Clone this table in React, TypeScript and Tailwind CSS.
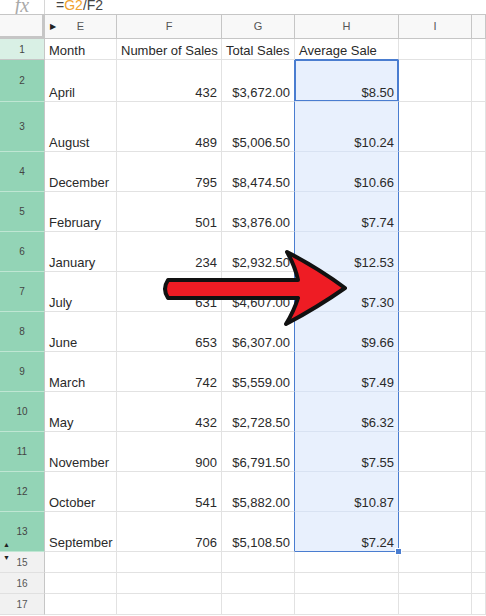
import React from 'react';

const ROWS = [
  { n: 2, h: 'h-[42px]', month: 'April', count: '432', total: '$3,672.00', avg: '$8.50' },
  { n: 3, h: 'h-[50px]', month: 'August', count: '489', total: '$5,006.50', avg: '$10.24' },
  { n: 4, h: 'h-[40px]', month: 'December', count: '795', total: '$8,474.50', avg: '$10.66' },
  { n: 5, h: 'h-[40px]', month: 'February', count: '501', total: '$3,876.00', avg: '$7.74' },
  { n: 6, h: 'h-[40px]', month: 'January', count: '234', total: '$2,932.50', avg: '$12.53' },
  { n: 7, h: 'h-[40px]', month: 'July', count: '631', total: '$4,607.00', avg: '$7.30' },
  { n: 8, h: 'h-[40px]', month: 'June', count: '653', total: '$6,307.00', avg: '$9.66' },
  { n: 9, h: 'h-[40px]', month: 'March', count: '742', total: '$5,559.00', avg: '$7.49' },
  { n: 10, h: 'h-[40px]', month: 'May', count: '432', total: '$2,728.50', avg: '$6.32' },
  { n: 11, h: 'h-[40px]', month: 'November', count: '900', total: '$6,791.50', avg: '$7.55' },
  { n: 12, h: 'h-[40px]', month: 'October', count: '541', total: '$5,882.00', avg: '$10.87' },
  { n: 13, h: 'h-[40px]', month: 'September', count: '706', total: '$5,108.50', avg: '$7.24' },
];

const cell = 'border-r border-b border-[#e2e2e2] flex items-end pb-[1px] px-[4px] text-[13px] text-[#2a2a2a] leading-[15px] whitespace-nowrap overflow-hidden';
const headCell = 'border-r border-b border-[#c6c6c6] bg-[#f8f8f8] flex items-center justify-center text-[11px] text-[#555]';

function RedArrow() {
  return (
    <svg className="absolute left-0 top-0 pointer-events-none" width="486" height="616" viewBox="0 0 486 616">
      <path
        d="M168,280 L298,280 Q295,266 287,252 Q318,268 345,288 Q318,307 286,324 Q294,311 298,298 L168,298 Q162,289 168,280 Z"
        fill="#ee1c24"
        stroke="#111"
        strokeWidth="4"
        strokeLinejoin="round"
      />
    </svg>
  );
}

export default function App() {
  return (
    <div className="relative w-[486px] h-[616px] overflow-hidden bg-white font-['Liberation_Sans',Arial,sans-serif]">
      {/* formula bar, mostly scrolled off the top */}
      <div className="h-[15px] flex border-b border-[#c6c6c6] overflow-hidden">
        <div className="w-[45px] border-r border-[#d6d6d6] flex justify-center">
          <span className="-mt-[10px] text-[20px] italic text-[#aaa] font-['Liberation_Serif',serif]">fx</span>
        </div>
        <div className="pl-[11px] -mt-[5px] text-[14px] text-[#444]">
          =<span className="text-[#f0a22e]">G2</span>/F2
        </div>
      </div>

      <div className="grid grid-cols-[45px_72px_105px_73px_104px_73px_14px]">
        {/* column headers */}
        <div className="h-[24px] border-r-[3px] border-b-[3px] border-[#c6c6c6] bg-[#f8f8f8]" />
        <div className={`${headCell} h-[24px] relative`}>
          <span className="absolute left-[5px] text-[8px] text-[#222]">▶</span>E
        </div>
        <div className={`${headCell} h-[24px]`}>F</div>
        <div className={`${headCell} h-[24px]`}>G</div>
        <div className={`${headCell} h-[24px] bg-[#dcdcdc]`}>H</div>
        <div className={`${headCell} h-[24px]`}>I</div>
        <div className={`${headCell} h-[24px]`} />

        {/* row 1 */}
        <div className="h-[21px] bg-[#d9f0e5] border-r border-b border-[#c6c6c6] flex items-center justify-center text-[10px] text-[#444]">1</div>
        <div className={`${cell} h-[21px]`}>Month</div>
        <div className={`${cell} h-[21px]`}>Number of Sales</div>
        <div className={`${cell} h-[21px]`}>Total Sales</div>
        <div className={`${cell} h-[21px] border-b-[#4a7dd0]`}>Average Sale</div>
        <div className={`${cell} h-[21px]`} />
        <div className={`${cell} h-[21px]`} />

        {ROWS.map((r, i) => {
          const last = i === ROWS.length - 1;
          return (
            <React.Fragment key={r.n}>
              <div className={`${r.h} relative bg-[#93d4b6] border-r border-b border-r-[#c6c6c6] border-b-[#bfe6d3] flex items-center justify-center text-[10px] text-[#444]`}>
                {r.n}
                {last && <span className="absolute left-[3px] bottom-[1px] text-[7px] text-[#222]">▲</span>}
              </div>
              <div className={`${cell} ${r.h}`}>{r.month}</div>
              <div className={`${cell} ${r.h} justify-end`}>{r.count}</div>
              <div className={`${cell} ${r.h} justify-end border-r-[#4a7dd0]`}>{r.total}</div>
              <div
                className={`${cell} ${r.h} relative justify-end overflow-visible bg-[#e8f0fd] border-r-[#4a7dd0] ${
                  last ? 'border-b-[#4a7dd0]' : 'border-b-[#d8e2f2]'
                } ${i === 0 ? 'shadow-[inset_0_0_0_1px_#4a7dd0]' : ''}`}
              >
                {r.avg}
                {last && (
                  <span className="absolute -right-[4px] -bottom-[4px] z-10 w-[7px] h-[7px] bg-[#4a7dd0] border border-white" />
                )}
              </div>
              <div className={`${cell} ${r.h}`} />
              <div className={`${cell} ${r.h}`} />
            </React.Fragment>
          );
        })}

        {[15, 16, 17].map((n) => (
          <React.Fragment key={n}>
            <div className="h-[21px] relative bg-[#f1f1f1] border-r border-b border-[#c6c6c6] border-b-[#e0e0e0] flex items-center justify-center text-[10px] text-[#555]">
              {n}
              {n === 15 && <span className="absolute left-[3px] top-[1px] text-[7px] text-[#222]">▼</span>}
            </div>
            <div className={`${cell} h-[21px]`} />
            <div className={`${cell} h-[21px]`} />
            <div className={`${cell} h-[21px]`} />
            <div className={`${cell} h-[21px]`} />
            <div className={`${cell} h-[21px]`} />
            <div className={`${cell} h-[21px]`} />
          </React.Fragment>
        ))}
      </div>

      <RedArrow />
    </div>
  );
}
